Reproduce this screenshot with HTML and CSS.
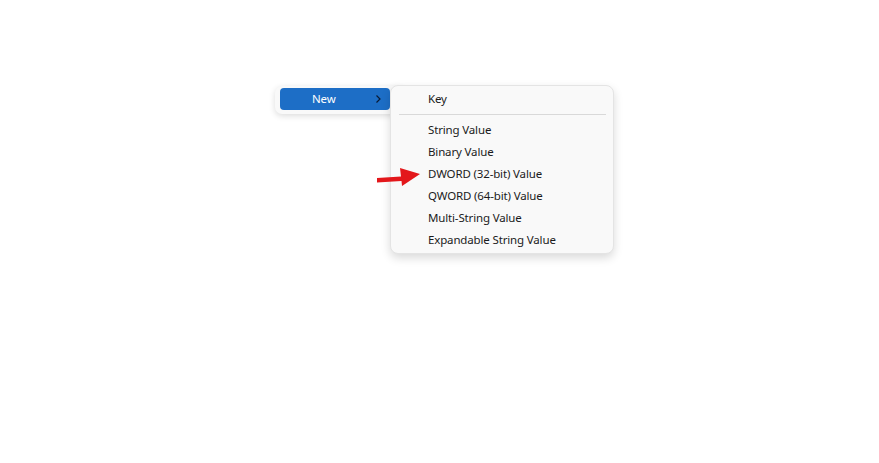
FILE: index.html
```html
<!DOCTYPE html>
<html>
<head>
<meta charset="utf-8">
<link rel="stylesheet" href="styles.css">
</head>
<body>
<div class="menu">
  <div class="item-active">
    <span class="label">New</span>
    <svg class="chev" width="8" height="10" viewBox="0 0 8 10"><path d="M2.5 1.5 L6 5 L2.5 8.5" fill="none" stroke="#0b1b33" stroke-width="1.2"/></svg>
  </div>
</div>
<div class="submenu">
  <div class="row">Key</div>
  <div class="sep"></div>
  <div class="row">String Value</div>
  <div class="row">Binary Value</div>
  <div class="row">DWORD (32-bit) Value</div>
  <div class="row">QWORD (64-bit) Value</div>
  <div class="row">Multi-String Value</div>
  <div class="row">Expandable String Value</div>
</div>
<svg class="arrow" width="46" height="22" viewBox="0 0 46 22">
  <path d="M1 12 L25 10.5 L24 2 L44 8 L26 20 L25.5 15 L1 16.5 Z" fill="#e3171b"/>
</svg>
</body>
</html>
```
FILE: styles.css
```css
html, body {
  margin: 0;
  padding: 0;
  background: #ffffff;
  width: 879px;
  height: 463px;
  overflow: hidden;
  font-family: "Noto Sans", "Open Sans", sans-serif;
  font-size: 11.5px;
  letter-spacing: -0.15px;
  color: #1b1b1b;
}
.menu {
  position: absolute;
  left: 275px;
  top: 86px;
  width: 130px;
  height: 28px;
  background: #f9f9f9;
  border-radius: 7px;
  box-shadow: 0 2px 6px rgba(0,0,0,0.14);
  padding: 2px 0 0 5px;
  box-sizing: border-box;
}
.item-active {
  width: 110px;
  height: 22px;
  background: #1d6ec6;
  border-radius: 4px;
  display: flex;
  align-items: center;
  position: relative;
}
.item-active .label {
  color: #ffffff;
  margin-left: 32px;
  margin-top: -1px;
}
.item-active .chev {
  position: absolute;
  left: 94px;
  top: 6px;
}
.submenu {
  position: absolute;
  left: 390px;
  top: 85px;
  width: 224px;
  height: 169px;
  box-sizing: border-box;
  background: #f9f9f9;
  border: 1px solid #e4e4e4;
  border-radius: 8px;
  box-shadow: 0 4px 10px rgba(0,0,0,0.15);
  padding: 2px 0 0 0;
}
.row {
  height: 22px;
  line-height: 22px;
  padding-left: 37px;
  white-space: nowrap;
}
.sep {
  height: 1px;
  background: #d9d9d9;
  margin: 4px 7px 4px 8px;
}
.arrow {
  position: absolute;
  left: 376px;
  top: 166px;
}
```
